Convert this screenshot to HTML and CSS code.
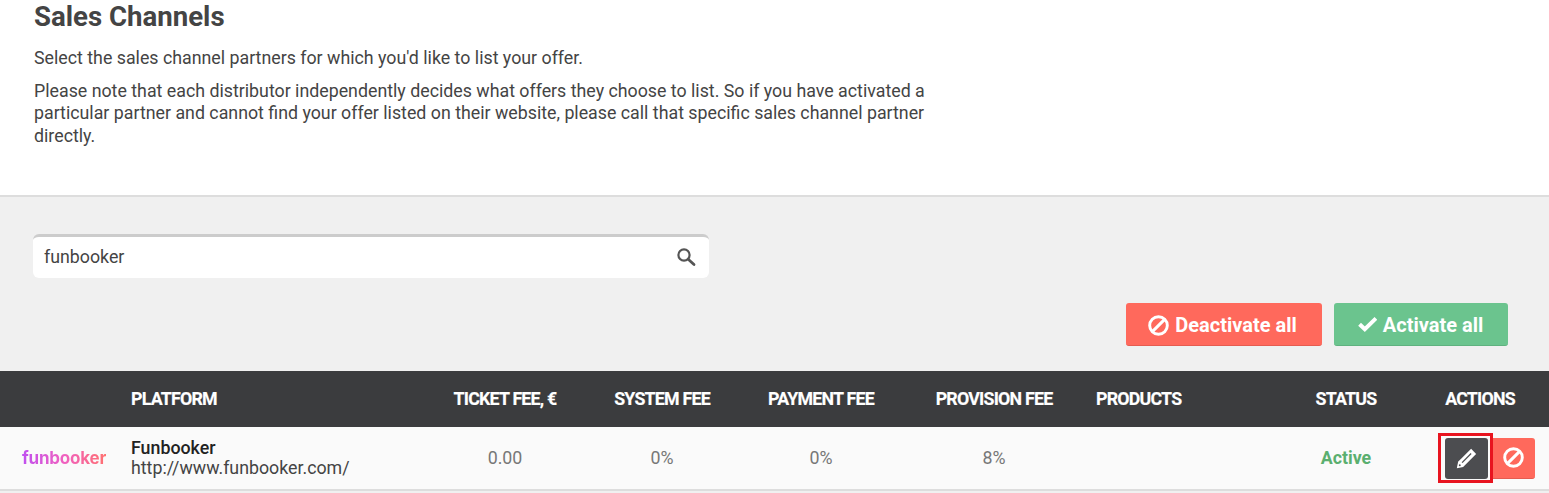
FILE: index.html
```html
<!DOCTYPE html>
<html lang="en">
<head>
    <meta charset="UTF-8">
    <meta name="viewport" content="width=device-width, initial-scale=1.0">
    <title>Sales Channels</title>
    <link rel="stylesheet" href="styles.css">
</head>
<body>

<header class="intro">
    <h1>Sales Channels</h1>
    <p>Select the sales channel partners for which you'd like to list your offer.</p>
    <p class="note">Please note that each distributor independently decides what offers they choose to list. So if you have activated a particular partner and cannot find your offer listed on their website, please call that specific sales channel partner directly.</p>
</header>

<section class="panel">
    <div class="search">
        <span class="search-value">funbooker</span>
        <svg class="search-icon" viewBox="0 0 20 20">
            <circle cx="8" cy="8" r="5.6" fill="none" stroke="currentColor" stroke-width="2.2"/>
            <path d="M12.2 12.2 L18 17.5" fill="none" stroke="currentColor" stroke-width="2.8" stroke-linecap="round"/>
        </svg>
    </div>
    <div class="bulk-actions">
        <button class="btn btn-red">
            <svg class="btn-icon" viewBox="0 0 20 20">
                <circle cx="10" cy="10" r="8.4" fill="none" stroke="currentColor" stroke-width="2.8"/>
                <path d="M4.4 15.6 L15.6 4.4" stroke="currentColor" stroke-width="2.8"/>
            </svg>
            Deactivate all
        </button>
        <button class="btn btn-green">
            <svg class="btn-icon" viewBox="0 0 20 20">
                <path d="M3.4 8.8 L8.4 13.6 L19 3.2" fill="none" stroke="currentColor" stroke-width="3.8"/>
            </svg>
            Activate all
        </button>
    </div>
</section>

<div class="table">
    <div class="row head">
        <div></div>
        <div>PLATFORM</div>
        <div class="center">TICKET FEE, €</div>
        <div class="center">SYSTEM FEE</div>
        <div class="center">PAYMENT FEE</div>
        <div class="center">PROVISION FEE</div>
        <div class="products">PRODUCTS</div>
        <div class="center">STATUS</div>
        <div class="center">ACTIONS</div>
    </div>
    <div class="row item">
        <div class="logo-cell"><span class="logo">funbooker</span></div>
        <div class="platform">
            <strong>Funbooker</strong>
            <span>http://www.funbooker.com/</span>
        </div>
        <div class="center muted">0.00</div>
        <div class="center muted">0%</div>
        <div class="center muted">0%</div>
        <div class="center muted">8%</div>
        <div></div>
        <div class="center status">Active</div>
        <div class="actions">
            <div class="highlight">
                <button class="icon-btn icon-btn-dark">
                    <svg viewBox="0 0 20 20">
                        <path d="M14.4 0.8 L19.2 5.6 L6.8 18 L0.8 19.2 L2 13.2 Z" fill="currentColor"/>
                        <path d="M14.4 5.3 L5.8 13.9" stroke="#4c4d50" stroke-width="1.2"/>
                        <circle cx="3.6" cy="16.4" r="0.9" fill="#4c4d50"/>
                    </svg>
                </button>
            </div>
            <button class="icon-btn icon-btn-red">
                <svg viewBox="0 0 20 20">
                    <circle cx="10" cy="10" r="8.4" fill="none" stroke="currentColor" stroke-width="2.8"/>
                    <path d="M4.4 15.6 L15.6 4.4" stroke="currentColor" stroke-width="2.8"/>
                </svg>
            </button>
        </div>
    </div>
</div>

</body>
</html>
```

FILE: styles.css
```css
html, body {
    height: 493px;
    overflow: hidden;
}
body {
    font-family: Roboto, Arial, sans-serif;
    background-color: #f0f0f0;
    color: #444;
    margin: 0;
    padding: 0;
}
.intro {
    background-color: #fff;
    border-bottom: 2px solid #ddd;
    height: 195px;
    padding: 0 0 0 34px;
}
.intro h1 {
    margin: 0;
    font-size: 27.6px;
    line-height: 33px;
    font-weight: 700;
    color: #444;
}
.intro p {
    margin: 14px 0 0;
    width: 900px;
    font-size: 17.8px;
    line-height: 22.5px;
}
.intro .note {
    margin-top: 10px;
}
.panel {
    height: 174px;
    padding: 37px 41px 0 33px;
    box-sizing: border-box;
}
.search {
    width: 676px;
    height: 44px;
    box-sizing: border-box;
    background-color: #fff;
    border-top: 3px solid #ccc;
    border-radius: 6px;
    padding: 0 13px 2px 11px;
    display: flex;
    align-items: center;
    justify-content: space-between;
}
.search-value {
    font-size: 17.8px;
    color: #444;
}
.search-icon {
    width: 20px;
    height: 20px;
    color: #555;
}
.bulk-actions {
    display: flex;
    justify-content: flex-end;
    gap: 12px;
    margin-top: 25px;
}
.btn {
    height: 43px;
    border: none;
    border-radius: 3px;
    color: #fff;
    font-family: inherit;
    font-size: 20px;
    font-weight: 700;
    display: flex;
    align-items: center;
    justify-content: center;
    gap: 6px;
    padding: 2px 3px 0 0;
}
.btn-icon {
    width: 21px;
    height: 21px;
}
.btn-red {
    width: 196px;
    background-color: #ff695c;
    border-bottom: 1px solid #e55c50;
}
.btn-green {
    width: 174px;
    background-color: #6bc48e;
    border-bottom: 1px solid #5fb27f;
}
.row {
    display: grid;
    grid-template-columns: 131px 295px 158px 156px 162px 184px 195px 130px 138px;
    align-items: center;
}
.head {
    height: 56px;
    box-sizing: border-box;
    padding-bottom: 1px;
    background-color: #3b3c3e;
    color: #fff;
    font-size: 17.8px;
    font-weight: 700;
    letter-spacing: -0.78px;
    -webkit-text-stroke: 0.15px #fff;
}
.center {
    text-align: center;
}
.products {
    padding-left: 10px;
}
.item {
    height: 62px;
    background-color: #fafafa;
    border-bottom: 2px solid #ddd;
    font-size: 17.8px;
}
.logo-cell {
    padding: 0 0 2px 22px;
}
.logo {
    font-family: Inter, "Open Sans", sans-serif;
    font-size: 17px;
    font-weight: 700;
    letter-spacing: -0.2px;
    background: linear-gradient(90deg, #c050f0, #f060c0 50%, #ff7070);
    -webkit-background-clip: text;
    background-clip: text;
    color: transparent;
}
.platform {
    display: flex;
    flex-direction: column;
    line-height: 20px;
}
.platform strong {
    color: #222;
    font-weight: 500;
}
.muted {
    color: #777;
    padding-bottom: 2px;
}
.status {
    color: #5aaf6f;
    font-weight: 700;
    padding-bottom: 2px;
}
.actions {
    display: flex;
    align-items: center;
    padding-left: 27px;
}
.highlight {
    border: 3px solid #e8141f;
    padding: 2px 2px 1px 4px;
    display: flex;
}
.icon-btn {
    width: 43px;
    height: 41px;
    border: none;
    border-radius: 3px;
    color: #fff;
    padding: 0;
    display: flex;
    align-items: center;
    justify-content: center;
}
.icon-btn svg {
    width: 21px;
    height: 21px;
}
.icon-btn-dark {
    background-color: #4c4d50;
}
.icon-btn-red {
    width: 42px;
    padding-right: 2px;
    background-color: #ff695c;
    border-bottom: 1px solid #e55c50;
    border-radius: 0 3px 3px 0;
}
```
